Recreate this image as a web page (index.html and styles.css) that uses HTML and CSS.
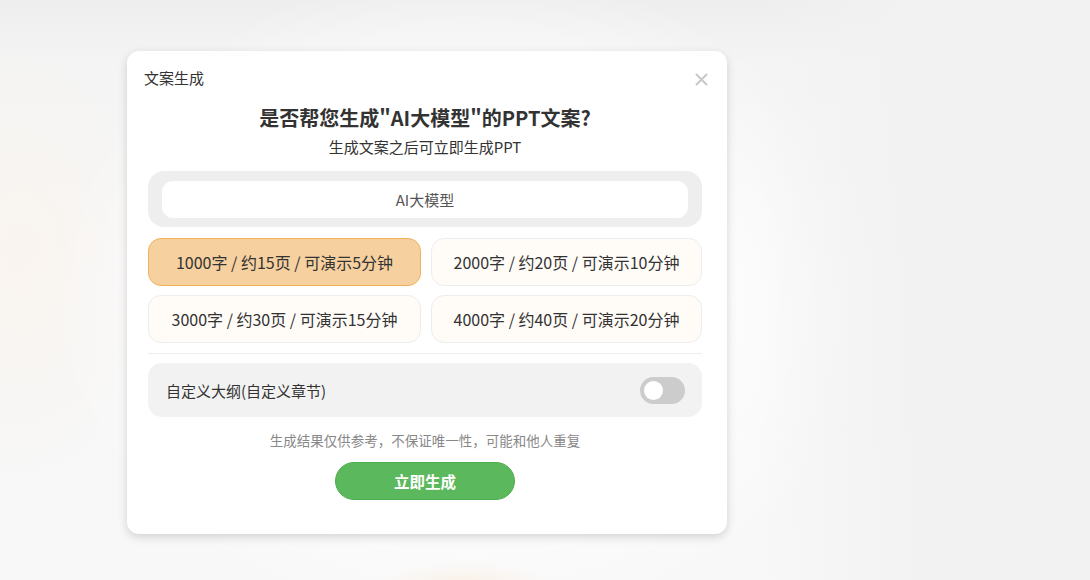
FILE: index.html
```html
<!DOCTYPE html>
<html lang="zh-CN">
<head>
<meta charset="utf-8">
<title>文案生成</title>
<link rel="stylesheet" href="styles.css">
</head>
<body>
<div class="stage">
  <div class="modal">
    <div class="modal-head">
      <span class="modal-title">文案生成</span>
      <svg class="close" width="13" height="13" viewBox="0 0 13 13"><path d="M1.5 1.5 L11.5 11.5 M11.5 1.5 L1.5 11.5" stroke="#c8c8c8" stroke-width="2" stroke-linecap="round"/></svg>
    </div>
    <h2 class="heading">是否帮您生成"AI大模型"的PPT文案?</h2>
    <p class="sub">生成文案之后可立即生成PPT</p>
    <div class="topic-wrap">
      <div class="topic">AI大模型</div>
    </div>
    <div class="options">
      <div class="opt active">1000字 / 约15页 / 可演示5分钟</div>
      <div class="opt">2000字 / 约20页 / 可演示10分钟</div>
      <div class="opt">3000字 / 约30页 / 可演示15分钟</div>
      <div class="opt">4000字 / 约40页 / 可演示20分钟</div>
    </div>
    <div class="divider"></div>
    <div class="custom">
      <span>自定义大纲(自定义章节)</span>
      <span class="switch"><span class="knob"></span></span>
    </div>
    <p class="note">生成结果仅供参考，不保证唯一性，可能和他人重复</p>
    <div class="actions">
      <button class="go">立即生成</button>
    </div>
  </div>
</div>
</body>
</html>
```
FILE: styles.css
```css
html, body {
  margin: 0;
  height: 100%;
}
body {
  font-family: "Noto Sans CJK SC", "Noto Sans", sans-serif;
  color: #333;
  overflow: hidden;
  background:
    radial-gradient(ellipse 90px 26px at 465px 588px, rgba(250, 220, 190, 0.35), rgba(250, 220, 190, 0) 100%),
    radial-gradient(ellipse 420px 330px at 470px 300px, #ffffff 40%, rgba(255,255,255,0) 100%),
    radial-gradient(ellipse 130px 220px at 20px 260px, rgba(250, 244, 238, 0.9), rgba(250,244,238,0) 100%),
    linear-gradient(to bottom, #eeeeee 0px, #f4f4f4 60px, #f7f7f7 300px, #f8f8f8 580px);
}
.stage {
  padding: 51px 0 0 127px;
  background: linear-gradient(to right, rgba(242,242,242,0) 760px, rgba(242,242,242,0.9) 900px, #f2f2f2 960px);
  height: 100%;
  box-sizing: border-box;
}
.modal {
  width: 600px;
  height: 483px;
  box-sizing: border-box;
  background: #fff;
  border-radius: 12px;
  box-shadow: 0 3px 10px rgba(0, 0, 0, 0.16);
  padding: 14px 25px 0 21px;
  display: flex;
  flex-direction: column;
}
.modal-head {
  display: flex;
  justify-content: space-between;
  align-items: center;
  height: 24px;
  margin-left: -4px;
  margin-right: -6px;
}
.modal-title {
  font-size: 15px;
  color: #333;
}
.close {
  display: block;
  margin-top: 4px;
}
.heading {
  margin: 15px 0 0;
  text-align: center;
  font-size: 20px;
  font-weight: 700;
  line-height: 28px;
  color: #333;
}
.sub {
  margin: 4px 0 0;
  text-align: center;
  font-size: 15px;
  line-height: 22px;
  color: #333;
}
.topic-wrap {
  margin-top: 13px;
  background: #eeeeee;
  border-radius: 16px;
  padding: 10px 14px 9px;
}
.topic {
  background: #fff;
  border-radius: 11px;
  height: 37px;
  line-height: 37px;
  text-align: center;
  font-size: 15px;
  color: #555;
}
.options {
  margin-top: 11px;
  display: grid;
  grid-template-columns: 273px 271px;
  column-gap: 10px;
  row-gap: 9px;
}
.opt {
  height: 48px;
  box-sizing: border-box;
  border: 1px solid #ededed;
  background: #fffcf8;
  border-radius: 13px;
  display: flex;
  align-items: center;
  justify-content: center;
  font-size: 16px;
  color: #333;
}
.opt.active {
  background: #f6d09f;
  border-color: #f0b25a;
}
.divider {
  margin-top: 10px;
  height: 1px;
  background: #eeeeee;
}
.custom {
  margin-top: 9px;
  height: 54px;
  background: #f2f2f2;
  border-radius: 14px;
  display: flex;
  align-items: center;
  justify-content: space-between;
  padding: 0 17px 0 18px;
  font-size: 15px;
  color: #333;
}
.switch {
  width: 45px;
  height: 27px;
  border-radius: 14px;
  background: #cccccc;
  display: flex;
  align-items: center;
  padding-left: 4px;
  box-sizing: border-box;
}
.knob {
  width: 19px;
  height: 19px;
  border-radius: 50%;
  background: #fff;
}
.note {
  margin: 13px 0 0;
  text-align: center;
  font-size: 13.5px;
  line-height: 20px;
  color: #888;
}
.actions {
  margin-top: 12px;
  display: flex;
  justify-content: center;
}
.go {
  width: 180px;
  height: 38px;
  border: 1px solid #4fae4f;
  border-radius: 19px;
  background: #5cb85c;
  color: #fff;
  font-family: "Noto Sans CJK SC", "Noto Sans", sans-serif;
  font-size: 15.5px;
  font-weight: 700;
  padding: 0;
}
```
